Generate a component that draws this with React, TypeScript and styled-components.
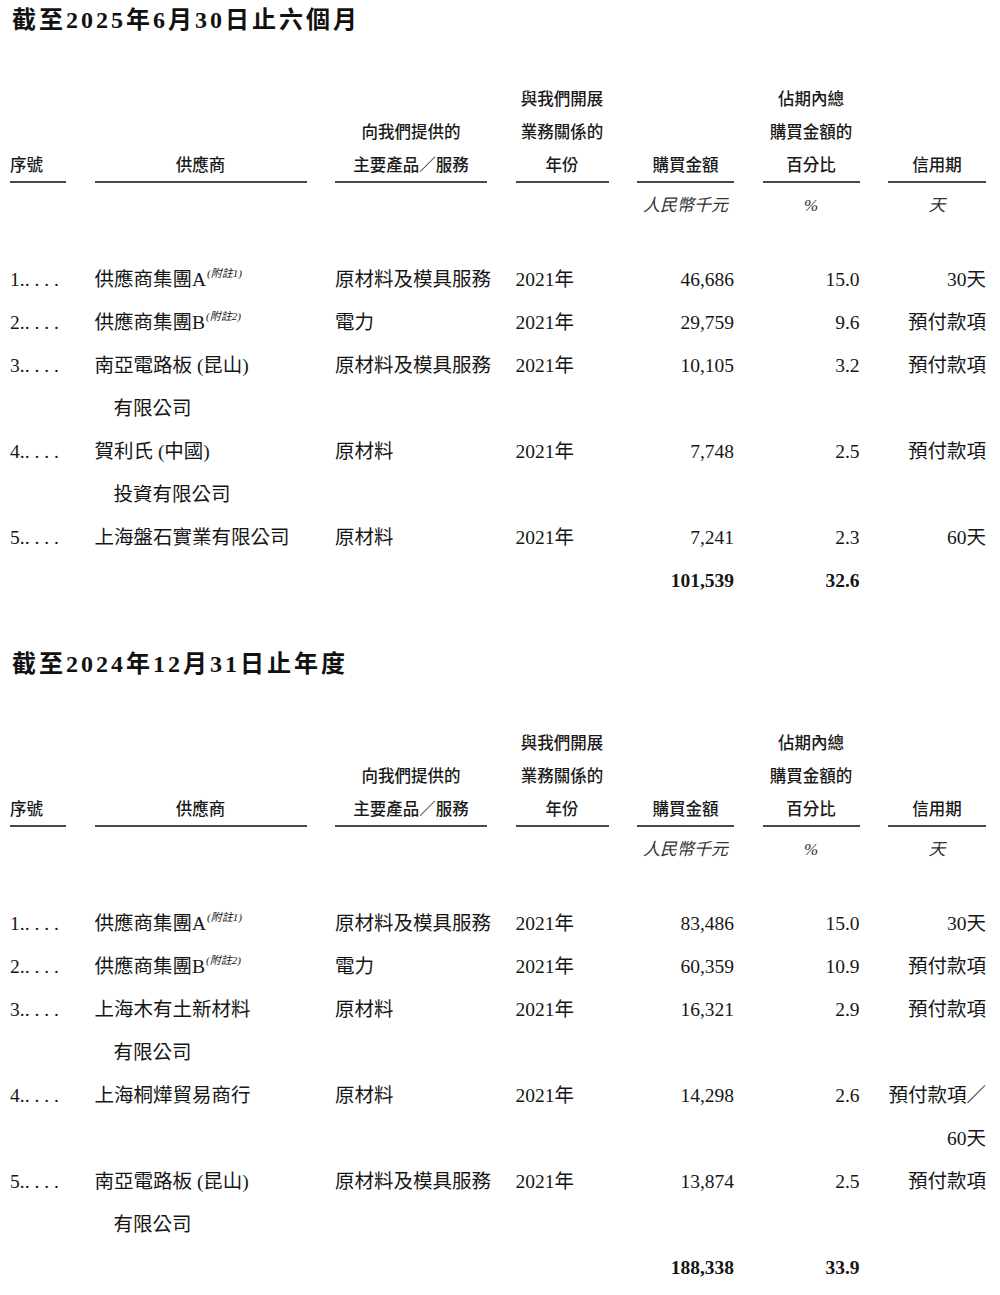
import React from "react";
import styled, { createGlobalStyle, css } from "styled-components";

type Row = {
  no: string;
  supplier: string[];
  note?: string;
  product: string;
  year: string;
  amount: string;
  percent: string;
  credit: string[];
};

type Section = {
  title: string;
  rows: Row[];
  total: { amount: string; percent: string };
};

const sections: Section[] = [
  {
    title: "截至2025年6月30日止六個月",
    rows: [
      { no: "1", supplier: ["供應商集團A"], note: "(附註1)", product: "原材料及模具服務", year: "2021年", amount: "46,686", percent: "15.0", credit: ["30天"] },
      { no: "2", supplier: ["供應商集團B"], note: "(附註2)", product: "電力", year: "2021年", amount: "29,759", percent: "9.6", credit: ["預付款項"] },
      { no: "3", supplier: ["南亞電路板 (昆山)", "有限公司"], product: "原材料及模具服務", year: "2021年", amount: "10,105", percent: "3.2", credit: ["預付款項"] },
      { no: "4", supplier: ["賀利氏 (中國)", "投資有限公司"], product: "原材料", year: "2021年", amount: "7,748", percent: "2.5", credit: ["預付款項"] },
      { no: "5", supplier: ["上海盤石實業有限公司"], product: "原材料", year: "2021年", amount: "7,241", percent: "2.3", credit: ["60天"] },
    ],
    total: { amount: "101,539", percent: "32.6" },
  },
  {
    title: "截至2024年12月31日止年度",
    rows: [
      { no: "1", supplier: ["供應商集團A"], note: "(附註1)", product: "原材料及模具服務", year: "2021年", amount: "83,486", percent: "15.0", credit: ["30天"] },
      { no: "2", supplier: ["供應商集團B"], note: "(附註2)", product: "電力", year: "2021年", amount: "60,359", percent: "10.9", credit: ["預付款項"] },
      { no: "3", supplier: ["上海木有土新材料", "有限公司"], product: "原材料", year: "2021年", amount: "16,321", percent: "2.9", credit: ["預付款項"] },
      { no: "4", supplier: ["上海桐燁貿易商行"], product: "原材料", year: "2021年", amount: "14,298", percent: "2.6", credit: ["預付款項／", "60天"] },
      { no: "5", supplier: ["南亞電路板 (昆山)", "有限公司"], product: "原材料及模具服務", year: "2021年", amount: "13,874", percent: "2.5", credit: ["預付款項"] },
    ],
    total: { amount: "188,338", percent: "33.9" },
  },
];

const headers: { lines: string[]; left?: boolean }[] = [
  { lines: ["序號"], left: true },
  { lines: ["供應商"] },
  { lines: ["向我們提供的", "主要產品／服務"] },
  { lines: ["與我們開展", "業務關係的", "年份"] },
  { lines: ["購買金額"] },
  { lines: ["佔期內總", "購買金額的", "百分比"] },
  { lines: ["信用期"] },
];

const units = ["", "", "", "", "人民幣千元", "%", "天"];

const GlobalStyle = createGlobalStyle`
  body {
    margin: 0;
    background: #ffffff;
    color: #161616;
  }
`;

const Page = styled.div`
  width: 1000px;
  padding: 0 14px 0 10px;
  box-sizing: border-box;
`;

const Block = styled.section`
  & + & {
    margin-top: 42px;
  }
`;

const Title = styled.h2`
  margin: 0 0 42px 2px;
  height: 40px;
  line-height: 40px;
  font-family: "Liberation Serif", "Noto Sans CJK TC", serif;
  font-size: 24px;
  font-weight: 700;
  letter-spacing: 3px;
  color: #111;
`;

const columns = css`
  display: grid;
  grid-template-columns: 56px 212px 152px 93px 97px 97px 98px;
  column-gap: 28.5px;
`;

const HeadGrid = styled.div`
  ${columns};
  align-items: end;
`;

const HeadCell = styled.div<{ $left?: boolean }>`
  border-bottom: 2px solid #4a4a4a;
  text-align: ${({ $left }) => ($left ? "left" : "center")};
  font-family: "Noto Sans CJK TC", sans-serif;
  font-size: 16.5px;
  font-weight: 500;
  line-height: 33px;
  color: #1a1a1a;
`;

const UnitGrid = styled.div`
  ${columns};
  margin: 11px 0 40px;
`;

const UnitCell = styled.div`
  text-align: center;
  font-family: "Liberation Serif", "Noto Sans CJK TC", serif;
  font-style: italic;
  font-size: 17px;
  line-height: 24px;
  color: #333;
`;

const BodyGrid = styled.div`
  ${columns};
`;

const Cell = styled.div<{ $align?: "left" | "right"; $bold?: boolean }>`
  text-align: ${({ $align }) => $align ?? "left"};
  font-family: "Liberation Serif", "Noto Sans CJK TC", serif;
  font-size: 19.5px;
  font-weight: ${({ $bold }) => ($bold ? 700 : 400)};
  line-height: 43px;
  white-space: nowrap;
  color: #161616;
`;

const Line = styled.div<{ $indent?: boolean }>`
  padding-left: ${({ $indent }) => ($indent ? "19px" : "0")};
`;

const Note = styled.sup`
  font-size: 11px;
  font-style: italic;
  line-height: 0;
  vertical-align: 9px;
  margin-left: 1px;
`;

const SectionTable: React.FC<{ section: Section }> = ({ section }) => (
  <Block>
    <Title>{section.title}</Title>
    <HeadGrid>
      {headers.map((h, i) => (
        <HeadCell key={i} $left={h.left}>
          {h.lines.map((l) => (
            <div key={l}>{l}</div>
          ))}
        </HeadCell>
      ))}
    </HeadGrid>
    <UnitGrid>
      {units.map((u, i) => (
        <UnitCell key={i}>{u}</UnitCell>
      ))}
    </UnitGrid>
    <BodyGrid>
      {section.rows.map((r) => (
        <React.Fragment key={r.no}>
          <Cell>{r.no}.. . . .</Cell>
          <Cell>
            {r.supplier.map((s, i) => (
              <Line key={s} $indent={i > 0}>
                {s}
                {i === 0 && r.note && <Note>{r.note}</Note>}
              </Line>
            ))}
          </Cell>
          <Cell>{r.product}</Cell>
          <Cell>{r.year}</Cell>
          <Cell $align="right">{r.amount}</Cell>
          <Cell $align="right">{r.percent}</Cell>
          <Cell $align="right">
            {r.credit.map((c) => (
              <Line key={c}>{c}</Line>
            ))}
          </Cell>
        </React.Fragment>
      ))}
      <Cell />
      <Cell />
      <Cell />
      <Cell />
      <Cell $align="right" $bold>
        {section.total.amount}
      </Cell>
      <Cell $align="right" $bold>
        {section.total.percent}
      </Cell>
      <Cell />
    </BodyGrid>
  </Block>
);

const App: React.FC = () => (
  <>
    <GlobalStyle />
    <Page>
      {sections.map((s) => (
        <SectionTable key={s.title} section={s} />
      ))}
    </Page>
  </>
);

export default App;
